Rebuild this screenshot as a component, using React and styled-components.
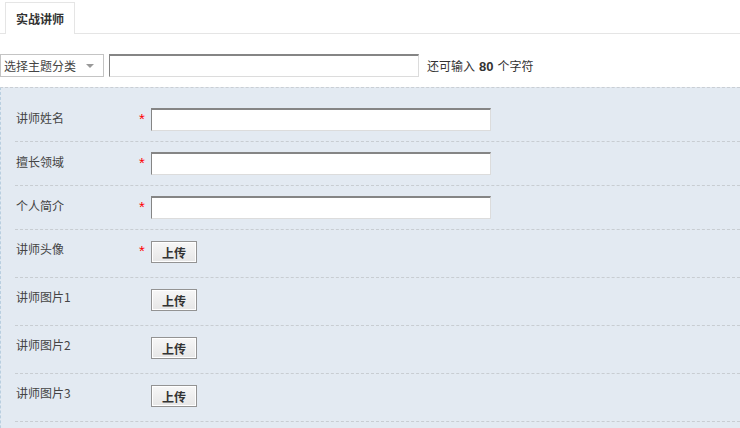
import React from "react";
import styled, { createGlobalStyle } from "styled-components";

const GlobalStyle = createGlobalStyle`
  body {
    margin: 0;
    background: #fff;
    font-family: "Noto Sans CJK SC", "Liberation Sans", sans-serif;
    font-size: 12px;
    color: #333;
  }
`;

const Page = styled.div`
  width: 740px;
  height: 428px;
  overflow: hidden;
`;

const TabBar = styled.div`
  display: flex;
  padding: 2px 0 0 5px;
  border-bottom: 1px solid #e5e5e5;
  height: 31px;
`;

const Tab = styled.div`
  width: 68px;
  height: 31px;
  border: 1px solid #e5e5e5;
  border-bottom: none;
  background: #fff;
  margin-bottom: -1px;
  display: flex;
  align-items: center;
  justify-content: center;
  font-weight: bold;
  font-size: 12px;
  color: #333;
`;

const Toolbar = styled.div`
  display: flex;
  align-items: center;
  margin-top: 20px;
  height: 23px;
`;

const Select = styled.div`
  box-sizing: border-box;
  width: 104px;
  height: 23px;
  border: 1px solid #c4c4c4;
  display: flex;
  align-items: center;
  justify-content: space-between;
  padding: 0 9px 0 3px;
  color: #444;
  background: #fff;
`;

const Arrow = styled.span`
  width: 0;
  height: 0;
  border-left: 4px solid transparent;
  border-right: 4px solid transparent;
  border-top: 4px solid #999;
`;

const TextBox = styled.div`
  box-sizing: border-box;
  width: ${(p) => p.w}px;
  height: 23px;
  background: #fff;
  border-top: 2px solid #858585;
  border-left: 1px solid #858585;
  border-right: 1px solid #dcdcdc;
  border-bottom: 1px solid #dcdcdc;
  margin-left: ${(p) => p.ml || 0}px;
`;

const Hint = styled.span`
  margin-left: 8px;
  color: #333;
  b {
    font-family: "Liberation Sans", sans-serif;
    font-size: 13px;
    margin: 0 4px;
  }
`;

const Panel = styled.div`
  margin-top: 10px;
  background: #e3eaf2;
  border-top: 1px dashed #c9ced4;
  border-left: 1px dashed #b9cfe0;
  padding-top: 10px;
  height: 400px;
`;

const Row = styled.div`
  box-sizing: border-box;
  margin-left: 14px;
  height: ${(p) => p.h}px;
  padding-top: 10px;
  border-bottom: 1px dashed #c8cdd2;
  display: flex;
  align-items: flex-start;
`;

const Label = styled.div`
  width: 123px;
  padding-left: 1px;
  line-height: ${(p) => p.lh}px;
  color: #444;
  margin-top: -2px;
`;

const Star = styled.span`
  width: 12px;
  margin-top: 5px;
  color: #f00;
  line-height: 12px;
  font-family: "Liberation Sans", sans-serif;
  font-size: 15px;
`;

const UploadButton = styled.button`
  box-sizing: border-box;
  width: 46px;
  height: 22px;
  padding: 0;
  margin-top: 1px;
  border: 1px solid #939393;
  background: linear-gradient(#f7f7f7, #e6e6e6);
  box-shadow: inset 0 0 0 1px #fff;
  font-family: "Noto Sans CJK SC", sans-serif;
  font-size: 12px;
  font-weight: bold;
  color: #333;
`;

const fields = [
  { label: "讲师姓名", required: true, type: "text" },
  { label: "擅长领域", required: true, type: "text" },
  { label: "个人简介", required: true, type: "text" },
  { label: "讲师头像", required: true, type: "file" },
  { label: "讲师图片1", type: "file" },
  { label: "讲师图片2", type: "file" },
  { label: "讲师图片3", type: "file" },
];

const App = () => {
  return (
    <Page>
      <GlobalStyle />
      <TabBar>
        <Tab>实战讲师</Tab>
      </TabBar>
      <Toolbar>
        <Select>
          选择主题分类
          <Arrow />
        </Select>
        <TextBox w={310} ml={5} />
        <Hint>
          还可输入<b>80</b>个字符
        </Hint>
      </Toolbar>
      <Panel>
        {fields.map((f) => (
          <Row key={f.label} h={f.type === "text" ? 44 : 48}>
            <Label lh={f.type === "text" ? 23 : 22}>{f.label}</Label>
            <Star>{f.required ? "*" : ""}</Star>
            {f.type === "text" ? <TextBox w={340} /> : <UploadButton>上传</UploadButton>}
          </Row>
        ))}
      </Panel>
    </Page>
  );
};

export default App;
